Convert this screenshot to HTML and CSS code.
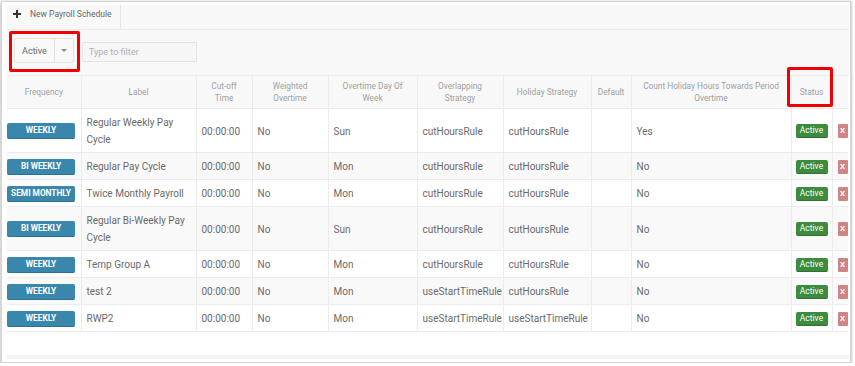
FILE: index.html
```html
<!DOCTYPE html>
<html lang="en">

<head>
	<meta charset="UTF-8">
	<title>Payroll Schedules</title>
	<link rel="stylesheet" href="styles.css">
</head>

<body>

	<div class="window">
		<div class="toolbar">
			<div class="tab">
				<svg class="plus" width="8" height="8" viewBox="0 0 8 8">
					<path d="M3 0h2v3h3v2h-3v3h-2v-3h-3v-2h3z" fill="#333" />
				</svg>
				New Payroll Schedule
			</div>
		</div>

		<div class="filters">
			<div class="mark">
				<div class="select">
					<span class="select-value">Active</span>
					<span class="select-caret"><i></i></span>
				</div>
			</div>
			<input class="filter-input" type="text" placeholder="Type to filter">
		</div>

		<table class="grid">
			<colgroup>
				<col style="width:74px">
				<col style="width:115px">
				<col style="width:56px">
				<col style="width:76px">
				<col style="width:89px">
				<col style="width:86px">
				<col style="width:88px">
				<col style="width:40px">
				<col style="width:160px">
				<col style="width:41px">
				<col style="width:16px">
			</colgroup>
			<thead>
				<tr>
					<th>Frequency</th>
					<th>Label</th>
					<th>Cut-off<br>Time</th>
					<th>Weighted<br>Overtime</th>
					<th>Overtime Day Of<br>Week</th>
					<th>Overlapping<br>Strategy</th>
					<th>Holiday Strategy</th>
					<th>Default</th>
					<th>Count Holiday Hours Towards Period<br>Overtime</th>
					<th class="status-head">Status<span class="mark-box"></span></th>
					<th></th>
				</tr>
			</thead>
			<tbody>
				<tr>
					<td class="freq"><span class="freq-badge">Weekly</span></td>
					<td>Regular Weekly Pay Cycle</td>
					<td>00:00:00</td>
					<td>No</td>
					<td>Sun</td>
					<td>cutHoursRule</td>
					<td>cutHoursRule</td>
					<td></td>
					<td>Yes</td>
					<td class="status"><span class="active-badge">Active</span></td>
					<td class="del"><span class="del-btn">X</span></td>
				</tr>
				<tr>
					<td class="freq"><span class="freq-badge">Bi Weekly</span></td>
					<td>Regular Pay Cycle</td>
					<td>00:00:00</td>
					<td>No</td>
					<td>Mon</td>
					<td>cutHoursRule</td>
					<td>cutHoursRule</td>
					<td></td>
					<td>No</td>
					<td class="status"><span class="active-badge">Active</span></td>
					<td class="del"><span class="del-btn">X</span></td>
				</tr>
				<tr>
					<td class="freq"><span class="freq-badge">Semi Monthly</span></td>
					<td>Twice Monthly Payroll</td>
					<td>00:00:00</td>
					<td>No</td>
					<td>Mon</td>
					<td>cutHoursRule</td>
					<td>cutHoursRule</td>
					<td></td>
					<td>No</td>
					<td class="status"><span class="active-badge">Active</span></td>
					<td class="del"><span class="del-btn">X</span></td>
				</tr>
				<tr>
					<td class="freq"><span class="freq-badge">Bi Weekly</span></td>
					<td>Regular Bi-Weekly Pay Cycle</td>
					<td>00:00:00</td>
					<td>No</td>
					<td>Sun</td>
					<td>cutHoursRule</td>
					<td>cutHoursRule</td>
					<td></td>
					<td>No</td>
					<td class="status"><span class="active-badge">Active</span></td>
					<td class="del"><span class="del-btn">X</span></td>
				</tr>
				<tr>
					<td class="freq"><span class="freq-badge">Weekly</span></td>
					<td>Temp Group A</td>
					<td>00:00:00</td>
					<td>No</td>
					<td>Mon</td>
					<td>cutHoursRule</td>
					<td>cutHoursRule</td>
					<td></td>
					<td>No</td>
					<td class="status"><span class="active-badge">Active</span></td>
					<td class="del"><span class="del-btn">X</span></td>
				</tr>
				<tr>
					<td class="freq"><span class="freq-badge">Weekly</span></td>
					<td>test 2</td>
					<td>00:00:00</td>
					<td>No</td>
					<td>Mon</td>
					<td>useStartTimeRule</td>
					<td>cutHoursRule</td>
					<td></td>
					<td>No</td>
					<td class="status"><span class="active-badge">Active</span></td>
					<td class="del"><span class="del-btn">X</span></td>
				</tr>
				<tr>
					<td class="freq"><span class="freq-badge">Weekly</span></td>
					<td>RWP2</td>
					<td>00:00:00</td>
					<td>No</td>
					<td>Mon</td>
					<td>useStartTimeRule</td>
					<td>useStartTimeRule</td>
					<td></td>
					<td>No</td>
					<td class="status"><span class="active-badge">Active</span></td>
					<td class="del"><span class="del-btn">X</span></td>
				</tr>
			</tbody>
		</table>

		<div class="hscroll"></div>
	</div>

</body>

</html>
```

FILE: styles.css
```css
body {
	margin: 0;
	font-family: Roboto, "Liberation Sans", Arial, sans-serif;
	background: #ffffff;
}

.window {
	box-sizing: border-box;
	width: 850px;
	height: 362px;
	margin: 1px 0 0 1px;
	padding: 3px 1px 0 5px;
	border: 1px solid #d4d4d4;
	box-shadow: 0 1px 3px rgba(0, 0, 0, 0.4);
	background: #ffffff;
}

/* --- Toolbar --- */
.toolbar {
	display: flex;
	height: 24px;
	background: #f8f8f8;
	border-bottom: 1px solid #ececec;
}

.tab {
	display: flex;
	align-items: center;
	gap: 9px;
	padding: 0 0 6px 6px;
	width: 107px;
	border-right: 1px solid #e6e6e6;
	font-size: 8.5px;
	color: #666;
}

.plus {
	flex: none;
}

/* --- Filter row --- */
.filters {
	display: flex;
	align-items: center;
	gap: 2px;
	padding: 1px 0 3px 2px;
	background: #f8f8f8;
}

.mark {
	padding: 4px 3px 6px 2px;
	border: 3px solid #f00000;
	border-radius: 2px;
}

.select {
	display: flex;
	width: 60px;
	height: 25px;
	box-sizing: border-box;
	border: 1px solid #e2e2e2;
	border-radius: 2px;
	background: #f9f9f9;
	font-size: 9px;
	color: #6a6a6a;
}

.select-value {
	display: flex;
	align-items: center;
	justify-content: center;
	width: 39px;
	border-right: 1px solid #e2e2e2;
}

.select-caret {
	display: flex;
	flex: 1;
	align-items: center;
	justify-content: center;
}

.select-caret i {
	width: 0;
	height: 0;
	border-left: 3px solid transparent;
	border-right: 3px solid transparent;
	border-top: 3px solid #888;
}

.filter-input {
	box-sizing: border-box;
	width: 115px;
	height: 20px;
	padding: 0 6px;
	border: 1px solid #e4e4e4;
	border-radius: 1px;
	background: #f6f6f6;
	font-family: inherit;
	font-size: 9px;
	color: #555;
}

.filter-input::placeholder {
	color: #b0b0b0;
}

/* --- Grid --- */
.grid {
	width: 841px;
	table-layout: fixed;
	border-collapse: collapse;
	font-size: 10px;
	color: #6a6a6a;
}

.grid th {
	height: 24px;
	padding: 4px 2px 4px;
	border-top: 1px solid #ececec;
	border-left: 1px solid #ececec;
	background: #f8f8f8;
	font-size: 8.3px;
	font-weight: normal;
	line-height: 12px;
	color: #a0a0a0;
	text-align: center;
}

.grid th:first-child,
.grid td:first-child {
	border-left: none;
}

.status-head {
	position: relative;
}

/* red annotation round the Status header */
.mark-box {
	position: absolute;
	left: -5px;
	top: -9px;
	width: 40px;
	height: 34px;
	border: 3px solid #f00000;
	border-radius: 2px;
}

.grid td {
	padding: 5px 5px 4px;
	border-top: 1px solid #ececec;
	border-left: 1px solid #ececec;
	line-height: 17px;
	vertical-align: middle;
}

.grid tbody tr:nth-child(even) td {
	background: #f9f9f9;
}

.grid tbody tr:last-child td {
	border-bottom: 1px solid #ececec;
}

.grid td.freq {
	padding-left: 0;
	padding-right: 0;
}

.freq-badge {
	display: block;
	width: 68px;
	height: 16px;
	box-sizing: border-box;
	border-radius: 2px;
	border-bottom: 1px solid #2f6f90;
	background: #3a87ad;
	color: #ffffff;
	font-size: 8.3px;
	font-weight: bold;
	line-height: 15px;
	text-align: center;
	text-transform: uppercase;
	white-space: nowrap;
}

.grid td.status {
	padding-left: 4px;
	padding-right: 0;
}

.active-badge {
	display: block;
	width: 32px;
	height: 14px;
	box-sizing: border-box;
	border-radius: 2px;
	border-bottom: 1px solid #2f6f30;
	background: #3d8b3d;
	color: #ffffff;
	font-size: 8.5px;
	line-height: 13px;
	text-align: center;
}

.grid td.del {
	padding-left: 5px;
	padding-right: 0;
}

.del-btn {
	display: block;
	width: 10px;
	height: 14px;
	border-radius: 1px;
	background: #d08585;
	color: #ffffff;
	font-size: 8px;
	font-weight: bold;
	line-height: 14px;
	text-align: center;
}

/* --- Bottom scroll track --- */
.hscroll {
	height: 4px;
	margin-top: 23px;
	background: #f3f3f3;
}
```
